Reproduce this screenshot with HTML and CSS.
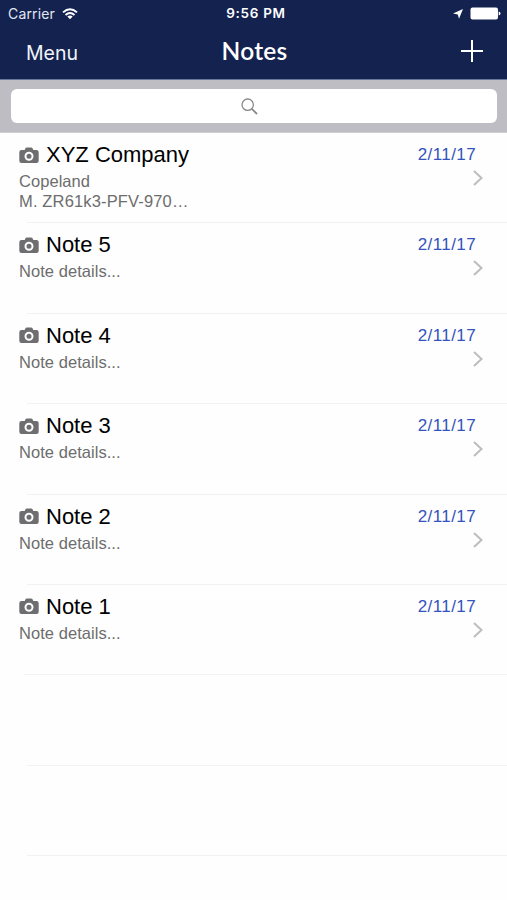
FILE: index.html
```html
<!DOCTYPE html>
<html lang="en">
  <head>
    <meta charset="UTF-8" />
    <meta name="viewport" content="width=device-width, initial-scale=1.0" />
    <title>Notes</title>
    <link rel="stylesheet" href="styles.css">
  </head>
  <body>
    <svg width="0" height="0" class="symbols" aria-hidden="true">
      <symbol id="camera" viewBox="0 0 20 17">
        <path fill="#6e6e70" d="M6.200 1.800Q6.700.5 8 .5H12Q13.300.5 13.800 1.800L14.300 3H17.500Q19.700 3 19.700 5.200V13.800Q19.700 16 17.500 16H2.500Q.3 16 .3 13.800V5.200Q.3 3 2.500 3H5.700Z"/>
        <circle cx="10" cy="9.200" r="3.500" fill="none" stroke="#fefefe" stroke-width="2"/>
      </symbol>
      <symbol id="chevron" viewBox="0 0 10 16">
        <path d="M1 1L8.500 8L1 15" fill="none" stroke="#bdbdc0" stroke-width="2"/>
      </symbol>
    </svg>

    <header>
      <div class="status">
        <div class="carrier">
          <span>Carrier</span>
          <svg width="16" height="12" viewBox="0 0 16 12">
            <g fill="none" stroke="#fff" stroke-width="1.900">
              <path d="M1 4.400Q8-2 15 4.400"/>
              <path d="M3.500 7Q8 3 12.500 7"/>
            </g>
            <path fill="#fff" d="M5.300 8.500Q8 6.500 10.700 8.500L8 11.300Z"/>
          </svg>
        </div>
        <time>9:56 PM</time>
        <div class="indicators">
          <svg width="10" height="10" viewBox="0 0 10 10"><path fill="#fff" d="M10 0L6 9.800L4.800 5.400L0 4.600Z"/></svg>
          <svg width="31" height="13" viewBox="0 0 31 13"><rect x=".5" y=".5" width="27.500" height="12" rx="2" fill="#fff"/><path fill="#fff" d="M28.700 4.500Q30.500 5 30.500 6.500T28.700 8.500Z"/></svg>
        </div>
      </div>
      <nav>
        <a class="menu">Menu</a>
        <h1>Notes</h1>
        <a class="add"><svg width="22" height="22" viewBox="0 0 22 22"><path d="M11 0V22M0 11H22" stroke="#fff" stroke-width="2"/></svg></a>
      </nav>
    </header>

    <div class="search">
      <div class="search-field">
        <svg width="17" height="17" viewBox="0 0 17 17"><g fill="none" stroke="#8a8a8c"><circle cx="6.700" cy="6.700" r="5.700" stroke-width="1.300"/><path d="M10.800 10.800L16 16" stroke-width="1.900"/></g></svg>
      </div>
    </div>

    <ul class="notes">
      <li>
        <div class="title"><svg><use href="#camera"/></svg><h2>XYZ Company</h2><time>2/11/17</time></div>
        <p>Copeland<br><span class="model">M. ZR61k3-PFV-970…</span></p>
        <svg class="chevron"><use href="#chevron"/></svg>
      </li>
      <li>
        <div class="title"><svg><use href="#camera"/></svg><h2>Note 5</h2><time>2/11/17</time></div>
        <p>Note details...</p>
        <svg class="chevron"><use href="#chevron"/></svg>
      </li>
      <li>
        <div class="title"><svg><use href="#camera"/></svg><h2>Note 4</h2><time>2/11/17</time></div>
        <p>Note details...</p>
        <svg class="chevron"><use href="#chevron"/></svg>
      </li>
      <li>
        <div class="title"><svg><use href="#camera"/></svg><h2>Note 3</h2><time>2/11/17</time></div>
        <p>Note details...</p>
        <svg class="chevron"><use href="#chevron"/></svg>
      </li>
      <li>
        <div class="title"><svg><use href="#camera"/></svg><h2>Note 2</h2><time>2/11/17</time></div>
        <p>Note details...</p>
        <svg class="chevron"><use href="#chevron"/></svg>
      </li>
      <li class="last">
        <div class="title"><svg><use href="#camera"/></svg><h2>Note 1</h2><time>2/11/17</time></div>
        <p>Note details...</p>
        <svg class="chevron"><use href="#chevron"/></svg>
      </li>
      <li></li>
      <li></li>
    </ul>
  </body>
</html>
```
FILE: styles.css
```css
* {
  box-sizing: border-box;
}

body {
  margin: 0;
  height: 900px;
  overflow: hidden;
  background: #fefefe;
  font-family: "Liberation Sans", Arial, sans-serif;
}

svg {
  display: block;
  flex: none;
}
.symbols {
  position: absolute;
}

header {
  height: 80px;
  background: #14224f;
  border-bottom: 1px solid #67799a;
  color: #fff;
}

.status {
  display: grid;
  grid-template-columns: 1fr auto 1fr;
  align-items: center;
  height: 27px;
  padding: 0 6px 0 8px;
  font: 14px/27px Inter, sans-serif;
}
.carrier {
  display: flex;
  align-items: center;
  gap: 7px;
  color: #e3e8f4;
}
.carrier span {
  letter-spacing: .15px;
}
.status time {
  font-size: 13.5px;
  font-weight: 600;
  letter-spacing: .7px;
  padding-left: 3px;
}
.indicators {
  display: flex;
  align-items: center;
  justify-content: flex-end;
  gap: 7px;
}

nav {
  display: grid;
  grid-template-columns: 1fr auto 1fr;
  align-items: center;
  height: 50px;
  padding: 0 24px 0 26px;
}
.menu {
  font: 19.500px/24px Inter, sans-serif;
  padding-top: 2px;
  color: #f0f3fa;
}
h1 {
  margin: -3px 0 0;
  font: 600 24.500px/30px Lato, sans-serif;
  letter-spacing: .2px;
}
.add {
  justify-self: end;
  margin-top: -2px;
}

.search {
  height: 53px;
  padding: 9px 10px 9px 11px;
  background: #bebdc3;
  border-bottom: 1px solid #d0d0d4;
}
.search-field {
  display: flex;
  align-items: center;
  justify-content: center;
  height: 34px;
  padding-right: 10px;
  background: #fff;
  border-radius: 6px;
}

.notes {
  margin: 0;
  padding: 0;
  list-style: none;
}
.notes li {
  position: relative;
  height: 90.4px;
  padding: 8px 31px 0 19px;
}
.notes li::after {
  content: "";
  position: absolute;
  left: 27px;
  right: 0;
  bottom: 0;
  height: 1px;
  background: #f2f2f3;
}
.notes .last::after {
  left: 24px;
}
.title {
  display: flex;
  align-items: center;
  height: 28px;
}
.title svg {
  width: 20px;
  height: 17px;
  margin-right: 7px;
}
h2 {
  margin: 0;
  font-size: 22px;
  font-weight: 400;
  color: #000;
}
.title time {
  margin-left: auto;
  font-size: 17px;
  letter-spacing: .4px;
  color: #3353bd;
}
.notes p {
  margin: 2px 0 0;
  font-size: 16.5px;
  line-height: 20px;
  letter-spacing: .05px;
  color: #6d6d6d;
}
.notes .model {
  letter-spacing: .15px;
}
.chevron {
  position: absolute;
  top: 37px;
  right: 24px;
  width: 10px;
  height: 16px;
}
```
